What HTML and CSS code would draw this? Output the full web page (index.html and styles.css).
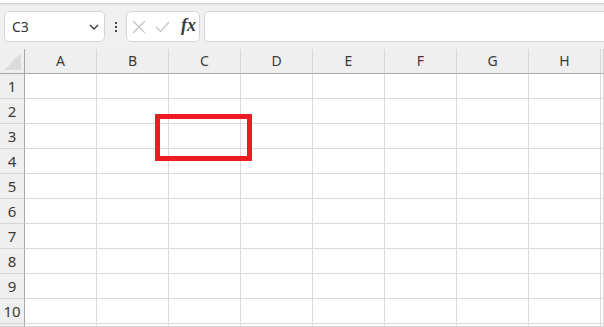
FILE: index.html
```html
<!DOCTYPE html>
<html>
<head>
    <meta charset="utf-8">
    <link rel="stylesheet" href="styles.css">
</head>
<body>

<div class="topbar"></div>

<div class="toolbar">
    <div class="name_box">
        <span class="cell_ref">C3</span>
        <svg class="chevron" width="10" height="6" viewBox="0 0 10 6"><path d="M1 1 L5 5 L9 1" fill="none" stroke="#333" stroke-width="1.3"/></svg>
    </div>
    <div class="kebab"><i></i><i></i><i></i></div>
    <div class="fx_box">
        <svg width="14" height="14" viewBox="0 0 14 14"><path d="M1 1 L13 13 M13 1 L1 13" stroke="#c2c2c2" stroke-width="1.2" fill="none"/></svg>
        <svg width="15" height="12" viewBox="0 0 15 12"><path d="M1 6 L5.5 10.5 L14 1" stroke="#c2c2c2" stroke-width="1.2" fill="none"/></svg>
        <span class="fx">fx</span>
    </div>
    <div class="formula"></div>
</div>

<div class="sheet">
    <div class="grid" id="grid"></div>
    <div class="marker"></div>
</div>

<script>
var grid = document.getElementById('grid');
var cols = ['A', 'B', 'C', 'D', 'E', 'F', 'G', 'H', ''];

// header row
var corner = document.createElement('div');
corner.className = 'corner';
corner.innerHTML = '<span class="tri"></span>';
grid.appendChild(corner);
cols.forEach(function(c) {
    var h = document.createElement('div');
    h.className = 'col_head';
    h.textContent = c;
    grid.appendChild(h);
});

// body rows, the 11th only peeks in at the bottom edge
for (var r = 1; r <= 11; r++) {
    var rh = document.createElement('div');
    rh.className = 'row_head';
    rh.textContent = r < 11 ? r : '';
    grid.appendChild(rh);
    for (var j = 0; j < cols.length; j++) {
        var cell = document.createElement('div');
        cell.className = 'cell';
        grid.appendChild(cell);
    }
}
</script>

</body>
</html>
```

FILE: styles.css
```css
body {
    margin: 0;
    background: #f0f0f0;
    font-family: "Noto Sans", "Noto Sans CJK JP", sans-serif;
    color: #3a3a3a;
    overflow: hidden;
    width: 604px;
    height: 327px;
}

.topbar {
    height: 3px;
    background: #ffffff;
    box-shadow: 0 1px 2px rgba(0, 0, 0, 0.18);
}

.toolbar {
    display: flex;
    align-items: center;
    margin-top: 8px;
    padding-left: 4px;
    height: 31px;
}

.name_box {
    width: 101px;
    height: 31px;
    box-sizing: border-box;
    background: #ffffff;
    border: 1px solid #d6d6d6;
    border-radius: 5px;
    display: flex;
    align-items: center;
    justify-content: space-between;
    padding: 0 5px 0 7px;
}

.cell_ref {
    font-size: 14px;
    color: #333333;
}

.kebab {
    width: 21px;
    display: flex;
    flex-direction: column;
    align-items: center;
    gap: 2px;
}

.kebab i {
    display: block;
    width: 2px;
    height: 2px;
    background: #444444;
}

.fx_box {
    width: 74px;
    height: 31px;
    box-sizing: border-box;
    background: #ffffff;
    border: 1px solid #d6d6d6;
    border-radius: 5px;
    display: flex;
    align-items: center;
    gap: 9px;
    padding-left: 5px;
}

.fx {
    font-family: "Liberation Serif", serif;
    font-style: italic;
    font-weight: bold;
    font-size: 18px;
    color: #3a3a3a;
    margin-left: 2px;
    margin-top: -2px;
}

.formula {
    flex: 1;
    margin-left: 4px;
    height: 31px;
    box-sizing: border-box;
    background: #ffffff;
    border: 1px solid #d6d6d6;
    border-right: none;
    border-radius: 5px 0 0 5px;
}

.sheet {
    position: relative;
    margin-top: 7px;
}

.grid {
    display: grid;
    grid-template-columns: 25px repeat(8, 72px) 3px;
    grid-template-rows: repeat(11, 25px) 3px;
}

.corner, .col_head, .row_head, .cell {
    box-sizing: border-box;
    overflow: hidden;
}

.corner {
    position: relative;
    background: #efefef;
    border-right: 1px solid #a8a8a8;
    border-bottom: 1px solid #a8a8a8;
}

.tri {
    position: absolute;
    right: 3px;
    bottom: 3px;
    width: 0;
    height: 0;
    border-left: 17px solid transparent;
    border-bottom: 17px solid #dcdcdc;
}

.col_head {
    background: #efefef;
    border-right: 1px solid #d6d6d6;
    border-bottom: 1px solid #a8a8a8;
    font-size: 14px;
    text-align: center;
    line-height: 24px;
}

.row_head {
    background: #efefef;
    border-right: 1px solid #a8a8a8;
    border-bottom: 1px solid #d6d6d6;
    font-size: 15px;
    text-align: center;
    line-height: 24px;
}

.cell {
    background: #ffffff;
    border-right: 1px solid #dadada;
    border-bottom: 1px solid #dadada;
}

.marker {
    position: absolute;
    left: 155px;
    top: 65px;
    width: 97px;
    height: 47px;
    box-sizing: border-box;
    border: 5px solid #ed1c24;
}
```
